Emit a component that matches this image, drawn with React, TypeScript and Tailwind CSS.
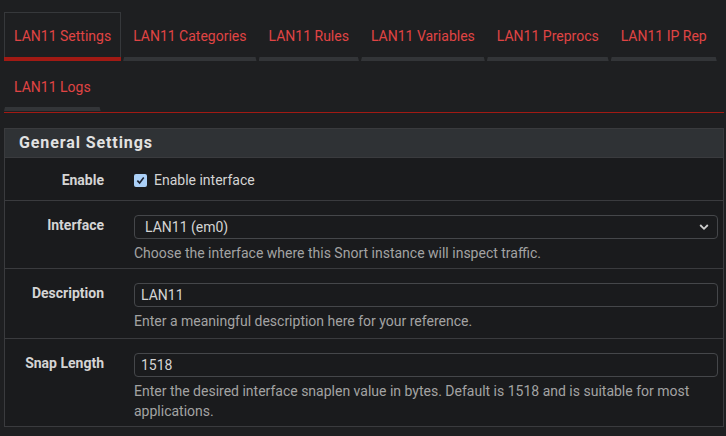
import React from "react";

const tabsRow1 = [
  { label: "LAN11 Settings", active: true },
  { label: "LAN11 Categories" },
  { label: "LAN11 Rules" },
  { label: "LAN11 Variables" },
  { label: "LAN11 Preprocs" },
  { label: "LAN11 IP Rep" },
];

function Tab({ label, active, extraTop }: { label: string; active?: boolean; extraTop?: boolean }) {
  return (
    <div
      className={
        "flex flex-col h-full " +
        (active ? "border-l border-t border-r border-[#36383b]" : "border-l border-t border-r border-transparent")
      }
    >
      <div
        className={
          "flex-1 flex items-center px-[9px] text-[14px] text-[#e04444] whitespace-nowrap " +
          (extraTop ? "pt-[5px]" : "pt-[3px]")
        }
      >
        {label}
      </div>
      <div
        className={
          active
            ? "h-[4px] bg-[#a11a14] -mx-px"
            : "h-[4px] bg-[#333538] -mx-px [clip-path:polygon(1px_0,calc(100%-1px)_0,100%_100%,0_100%)]"
        }
      />
    </div>
  );
}

function Row({
  label,
  children,
  className,
  labelClass,
}: {
  label: string;
  children: React.ReactNode;
  className?: string;
  labelClass?: string;
}) {
  return (
    <div className={"flex border-t border-[#3a3b3e] " + (className ?? "")}>
      <div
        className={
          "w-[99px] shrink-0 text-right text-[14px] font-bold text-[#d4d4d4] " + (labelClass ?? "")
        }
      >
        {label}
      </div>
      <div className="flex-1 ml-[30px] mr-[5px]">{children}</div>
    </div>
  );
}

export default function App() {
  return (
    <div
      className="w-[726px] h-[436px] bg-[#1e1f21] overflow-hidden"
      style={{ fontFamily: "Roboto, 'Liberation Sans', sans-serif" }}
    >
      <div className="pt-[12px] pl-[4px]">
        <div className="flex gap-[2px] h-[49px]">
          {tabsRow1.map((t) => (
            <Tab key={t.label} label={t.label} active={t.active} />
          ))}
        </div>
        <div className="flex h-[50px]">
          <Tab label="LAN11 Logs" extraTop />
        </div>
        <div className="h-px bg-[#a11a14] mt-px mr-[2px]" />
      </div>

      <div className="mt-[15px] ml-[4px] w-[720px] border border-[#3a3b3e] bg-[#1a1b1d]">
        <div className="h-[28px] bg-[#2f3235] flex items-center pl-[14px] text-[16px] font-bold tracking-[0.9px] text-[#e2e2e2]">
          General Settings
        </div>
        <Row label="Enable" className="h-[43px] items-center" labelClass="mt-[3px]">
          <div className="flex items-center gap-[7px] mt-[3px]">
            <div className="w-[13px] h-[13px] rounded-[2px] bg-[#abd0f7] flex items-center justify-center">
              <svg width="9" height="9" viewBox="0 0 10 10">
                <path d="M1.5 5.2 L4 7.7 L8.6 1.8" stroke="#1c2230" strokeWidth="1.8" fill="none" />
              </svg>
            </div>
            <span className="text-[14px] text-[#d4d4d4]">Enable interface</span>
          </div>
        </Row>
        <Row label="Interface" className="h-[68px] pt-[14px]">
          <div>
            <div className="h-[24px] border border-[#45474a] rounded-[4px] flex items-center justify-between pl-[10px] pr-[8px] text-[14px] text-[#d4d4d4]">
              <span>LAN11 (em0)</span>
              <svg width="10" height="8" viewBox="0 0 10 8">
                <path d="M1.2 2 L5 5.8 L8.8 2" stroke="#cfcfcf" strokeWidth="1.8" fill="none" />
              </svg>
            </div>
            <div className="mt-[4px] text-[14px] leading-[20px] text-[#a3a3a3]">
              Choose the interface where this Snort instance will inspect traffic.
            </div>
          </div>
        </Row>
        <Row label="Description" className="h-[70px] pt-[14px]">
          <div>
            <div className="h-[24px] border border-[#45474a] rounded-[4px] flex items-center pl-[6px] text-[14px] text-[#d4d4d4]">
              LAN11
            </div>
            <div className="mt-[4px] text-[14px] leading-[20px] text-[#a3a3a3]">
              Enter a meaningful description here for your reference.
            </div>
          </div>
        </Row>
        <Row label="Snap Length" className="h-[88px] pt-[14px]">
          <div>
            <div className="h-[24px] border border-[#45474a] rounded-[4px] flex items-center pl-[6px] text-[14px] text-[#d4d4d4]">
              1518
            </div>
            <div className="mt-[4px] text-[14px] leading-[20px] text-[#a3a3a3]">
              Enter the desired interface snaplen value in bytes. Default is 1518 and is suitable for most
              applications.
            </div>
          </div>
        </Row>
      </div>
    </div>
  );
}
